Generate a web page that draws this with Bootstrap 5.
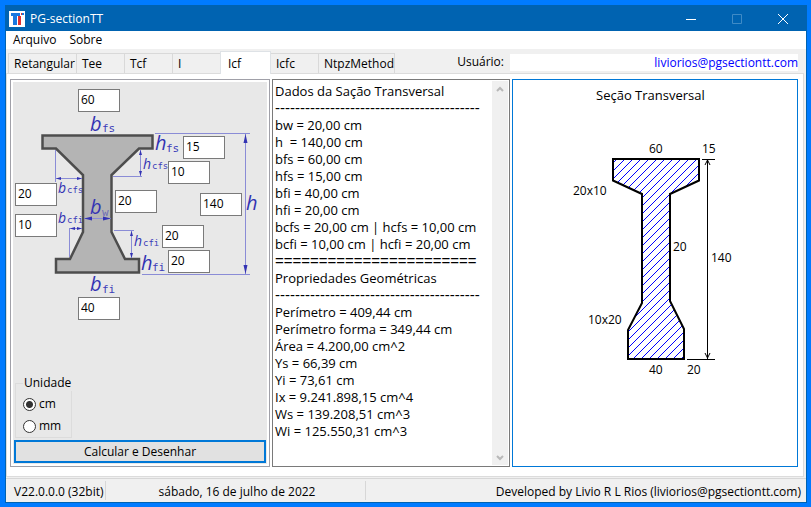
<!DOCTYPE html>
<html lang="pt-BR">
<head>
<meta charset="utf-8">
<meta name="viewport" content="width=device-width, initial-scale=1">
<title>PG-sectionTT</title>
<link rel="stylesheet" href="https://cdn.jsdelivr.net/npm/bootstrap@5.3.0/dist/css/bootstrap.min.css">
<style>
  :root { --ui: "Open Sans", "Noto Sans", sans-serif; }
  body { background: #007bff; font-family: var(--ui); font-size: 12px; line-height: 16px; color: #000; padding: 5px 4px 5px 5px; }
  .app-window { border: 1px solid #0063b1; background: #f0f0f0; min-height: calc(100vh - 10px); }
  .title-bar { background: #0063b1; color: #fff; height: 25px; padding-left: 3px; gap: 5px; }
  .title-bar .caption-btn { width: 46px; height: 25px; background: none; border: 0; padding: 0; }
  .menu-bar { height: 18px; background: #fff; padding-left: 7px; gap: 13px; }
  .menu-bar a { color: #000; text-decoration: none; }
  .tab-strip { height: 24px; padding: 2px 8px 0 3px; }
  .tab-strip .nav-tabs { border: 0; align-self: flex-end; }
  .tab-strip .nav-link { border: 1px solid #d9d9d9; border-bottom: 0; border-radius: 0; margin: 0 0 0 -1px; width: 49px; height: 20px; padding: 1px 0 0 5px; color: #000; text-align: left; background: #f0f0f0; font-size: 12px; line-height: 18px; }
  .tab-strip .nav-link.wide { width: 69px; }
  .tab-strip .nav-link.wider { width: 77px; }
  .tab-strip .nav-link.active { height: 23px; width: 51px; padding-left: 7px; background: #fff; color: #000; margin-bottom: -1px; position: relative; }
  .user-field { gap: 6px; padding-top: 3px; }
  .user-mail { background: #fff; width: 288px; height: 17px; line-height: 17px; color: #00f; text-align: right; border: 0; padding: 0; }
  .page-pane { background: #fff; border: 1px solid #dcdcdc; margin-right: 2px; padding: 5px 5px 9px 3px; }
  .pane-grid { display: grid; grid-template-columns: 260fr 238fr 286fr; gap: 2px; min-height: 388px; }
  .entry-pane { border: 1px solid #a0a0a8; padding: 2px; }
  .entry-body { background: #e8e8e8; padding: 0 1px 1px; }
  .stage { position: relative; width: 254px; height: 244px; margin: 0 -1px; }
  .stage svg { display: block; }
  .stage input { position: absolute; width: 42px; height: 23px; border: 1px solid #7a7a7a; background: #fff; padding: 0 2px 2px; line-height: 18px; color: #000; }
  .unit-box { border: 1px solid #dcdcdc; width: 57px; height: 63px; margin: 0 0 2px 1px; padding: 0 0 0 7px; }
  .unit-box legend { font-size: 12px; line-height: 16px; float: none; width: auto; margin: 0 0 5px; padding: 0 1px; white-space: nowrap; }
  .unit-box .form-check { min-height: 0; margin: 0 0 6px; padding: 0; gap: 3px; }
  .unit-box .form-check-input { width: 13px; height: 13px; margin: 0; float: none; border: 1px solid #333; background: #fff; }
  .unit-box .form-check-input:checked { background: radial-gradient(circle, #333 0 3px, #fff 4px); }
  .calc-btn { border: 2px solid #0078d7; border-radius: 0; background: #e1e1e1; color: #000; height: 23px; padding: 0; font-size: 12px; line-height: 18px; }
  .report-pane { border: 1px solid #7a7a7a; padding: 1px; }
  .report-text { font-size: 13px; line-height: 17px; margin: 0; padding: 2px 0 0 1px; font-family: var(--ui); white-space: pre; overflow: hidden; }
  .report-rule { font-family: "Liberation Sans", sans-serif; font-size: 15px; line-height: 16px; }
  .scroll-track { width: 16px; background: #f0f0f0; padding: 5px 0 4px; }
  .section-pane { border: 1px solid #0078d7; }
  .status-line { border-top: 1px solid #d7d7d7; margin-top: 1px; height: 24px; }
  .status-line > div { padding: 2px 5px 0 8px; margin: 2px 0; line-height: 17px; border-right: 1px solid #d7d7d7; white-space: nowrap; }
  .status-line .cell-ver { width: 100px; }
  .status-line .cell-date { width: 260px; }
  .status-line > div:last-child { border: 0; }
  .lbl { font-family: var(--ui); font-style: italic; fill: #3333b3; }
  .sub { font-family: "DejaVu Sans Mono", monospace; fill: #3c3cb8; }
</style>
<script src="https://cdn.jsdelivr.net/npm/bootstrap@5.3.0/dist/js/bootstrap.bundle.min.js"></script>
</head>
<body>
<div class="app-window d-flex flex-column">
  <header class="title-bar d-flex align-items-center">
    <svg width="16" height="16" viewBox="0 0 16 16" aria-hidden="true"><path fill="#fff" d="M0 0h16v16H0z"/><path fill="#1a78e0" d="M2 2h9v3H8v9H4V5H2z"/><path fill="#e03030" d="M9 5h3v9H9z"/><path fill="#e03030" d="M12 2h1v2h-1z"/><path fill="#1a78e0" d="M13 2h2v2h-2z"/></svg>
    <span>PG-sectionTT</span>
    <div class="ms-auto d-flex">
      <button class="caption-btn" aria-label="Minimizar"><svg width="10" height="10" viewBox="0 0 10 10"><path d="M0 5.500h10" stroke="#fff"/></svg></button>
      <button class="caption-btn" aria-label="Maximizar" disabled><svg width="10" height="10" viewBox="0 0 10 10"><path d="M.5.5h9v9h-9z" fill="none" stroke="#3f8bc6"/></svg></button>
      <button class="caption-btn" aria-label="Fechar"><svg width="10" height="10" viewBox="0 0 10 10"><path d="M0 0l10 10M10 0L0 10" stroke="#fff"/></svg></button>
    </div>
  </header>
  <nav class="menu-bar d-flex align-items-center"><a href="#">Arquivo</a><a href="#">Sobre</a></nav>
  <div class="tab-strip d-flex">
    <div class="nav nav-tabs align-items-end" role="tablist">
      <button class="nav-link wide" role="tab">Retangular</button>
      <button class="nav-link" role="tab">Tee</button>
      <button class="nav-link" role="tab">Tcf</button>
      <button class="nav-link" role="tab">I</button>
      <button class="nav-link active" role="tab" aria-selected="true">Icf</button>
      <button class="nav-link" role="tab">Icfc</button>
      <button class="nav-link wider" role="tab">NtpzMethod</button>
    </div>
    <div class="user-field ms-auto d-flex align-items-start">
      <label for="user">Usuário:</label>
      <input id="user" class="user-mail" value="liviorios@pgsectiontt.com" readonly>
    </div>
  </div>
  <main class="page-pane flex-grow-1 d-flex flex-column">
    <div class="pane-grid flex-grow-1">
      <section class="entry-pane d-flex">
        <div class="entry-body flex-grow-1 d-flex flex-column">
          <div class="stage">
            <svg width="254" height="244" viewBox="13 82 254 244" aria-hidden="true">
              <path d="M42.500 135.500H152.500V148.500H139L111.500 175V232L125 259H139V272.500H56V259H70L83 232V175L56 148.500H42.500Z" fill="#b4b4b4" stroke="#4d4d4d" stroke-width="2.500"/>
              <g fill="none" stroke="#8a8cd6">
                <path d="M155 133.500H250M142 274.500H250M245.500 134V274M140.500 150V176M113 176.500H142M55.500 150V182M56 178.500H82M84 218.500H111M69.500 257V228M70 228.500H82M131.500 231V258M114 230.500H134"/>
              </g>
              <g fill="#3333b3">
                <path d="M245.500 134l2 9h-4zM245.500 274l2-9h-4zM140.500 150l1.500 5h-3zM140.500 176l1.500-5h-3zM56 178.500l5-1.500v3zM82 178.500l-5-1.500v3zM84 218.500l8-2v4zM111 218.500l-8-2v4zM70 228.500l5-1.500v3zM82 228.500l-5-1.500v3zM131.500 231l1.500 5h-3zM131.500 258l1.500-5h-3z"/>
              </g>
              <g class="lbl" font-size="20">
                <text x="90" y="131">b</text><text x="155" y="150">h</text><text x="90" y="214">b</text>
                <text x="246" y="210">h</text><text x="141" y="270">h</text><text x="90" y="291">b</text>
              </g>
              <g class="lbl" font-size="14">
                <text x="143" y="169">h</text><text x="58" y="193">b</text><text x="58" y="223">b</text><text x="134" y="246">h</text>
              </g>
              <g class="sub" font-size="11">
                <text x="102" y="132">fs</text><text x="166" y="152">fs</text><text x="102" y="216" fill-opacity=".6">w</text>
                <text x="152" y="271">fi</text><text x="102" y="293">fi</text>
              </g>
              <g class="sub" font-size="9">
                <text x="152" y="169">cfs</text><text x="67" y="193">cfs</text><text x="67" y="223">cfi</text><text x="143" y="246">cfi</text>
              </g>
            </svg>
            <input aria-label="bfs" value="60" style="left:65px;top:7px">
            <input aria-label="hfs" value="15" style="left:170px;top:54px">
            <input aria-label="hcfs" value="10" style="left:155px;top:79px">
            <input aria-label="bcfs" value="20" style="left:2px;top:101px">
            <input aria-label="bw" value="20" style="left:102px;top:108px">
            <input aria-label="h" value="140" style="left:187px;top:111px">
            <input aria-label="bcfi" value="10" style="left:2px;top:132px">
            <input aria-label="hcfi" value="20" style="left:149px;top:143px">
            <input aria-label="hfi" value="20" style="left:155px;top:168px">
            <input aria-label="bfi" value="40" style="left:65px;top:215px">
          </div>
          <fieldset class="unit-box mt-auto">
            <legend>Unidade</legend>
            <div class="form-check d-flex align-items-center"><input class="form-check-input" type="radio" name="unit" id="cm" checked><label for="cm">cm</label></div>
            <div class="form-check d-flex align-items-center"><input class="form-check-input" type="radio" name="unit" id="mm"><label for="mm">mm</label></div>
          </fieldset>
          <button class="btn calc-btn">Calcular e Desenhar</button>
        </div>
      </section>
      <section class="report-pane d-flex">
        <pre class="report-text flex-grow-1">Dados da Sação Transversal
<span class="report-rule">-----------------------------------------</span>
bw = 20,00 cm
h  = 140,00 cm
bfs = 60,00 cm
hfs = 15,00 cm
bfi = 40,00 cm
hfi = 20,00 cm
bcfs = 20,00 cm | hcfs = 10,00 cm
bcfi = 10,00 cm | hcfi = 20,00 cm
<span class="report-rule">=======================</span>
Propriedades Geométricas
<span class="report-rule">-----------------------------------------</span>
Perímetro = 409,44 cm
Perímetro forma = 349,44 cm
Área = 4.200,00 cm^2
Ys = 66,39 cm
Yi = 73,61 cm
Ix = 9.241.898,15 cm^4
Ws = 139.208,51 cm^3
Wi = 125.550,31 cm^3</pre>
        <div class="scroll-track d-flex flex-column align-items-center justify-content-between flex-shrink-0">
          <svg width="8" height="6" viewBox="0 0 8 6"><path d="M1 5l3-3 3 3" fill="none" stroke="#b8b8b8" stroke-width="2"/></svg>
          <svg width="8" height="6" viewBox="0 0 8 6"><path d="M1 1l3 3 3-3" fill="none" stroke="#b8b8b8" stroke-width="2"/></svg>
        </div>
      </section>
      <section class="section-pane d-flex justify-content-center">
        <svg width="284" height="386" viewBox="513 80 284 386" font-size="12" role="img" aria-label="Seção Transversal">
          <defs><clipPath id="outline"><path d="M613 159H699V180.500L670 194V301L684 329V359H628V330L642 303V194L613 180.500Z"/></clipPath></defs>
          <text x="596" y="100" font-size="13">Seção Transversal</text>
          <g clip-path="url(#outline)"><path id="hatch" fill="none" stroke="#0000ff" stroke-width="1"/></g>
          <path d="M613 159H699V180.500L670 194V301L684 329V359H628V330L642 303V194L613 180.500Z" fill="none" stroke="#000" stroke-width="2"/>
          <path d="M702 159.500H715M687 359.500H715M707.500 160V359" stroke="#000"/>
          <path d="M705 165l2.500-5 2.500 5M705 353l2.500 5 2.500-5" fill="none" stroke="#000"/>
          <text x="649" y="153">60</text><text x="702" y="153">15</text><text x="573" y="195">20x10</text>
          <text x="673" y="251">20</text><text x="711" y="262">140</text><text x="588" y="324">10x20</text>
          <text x="649" y="374">40</text><text x="687" y="374">20</text>
        </svg>
      </section>
    </div>
  </main>
  <footer class="status-line d-flex">
    <div class="cell-ver">V22.0.0.0 (32bit)</div>
    <div class="cell-date text-center">sábado, 16 de julho de 2022</div>
    <div class="flex-grow-1 text-end">Developed by Livio R L Rios (liviorios@pgsectiontt.com)</div>
  </footer>
</div>
<script>
  // Diagonal hatch at 45 degrees, one line every 8 units, clipped to the section outline
  let hatchPath = "";
  for (let c = 776; c <= 1056; c += 8) hatchPath += `M${c - 159} 159L${c - 359} 359`;
  document.getElementById("hatch").setAttribute("d", hatchPath);
</script>
</body>
</html>
